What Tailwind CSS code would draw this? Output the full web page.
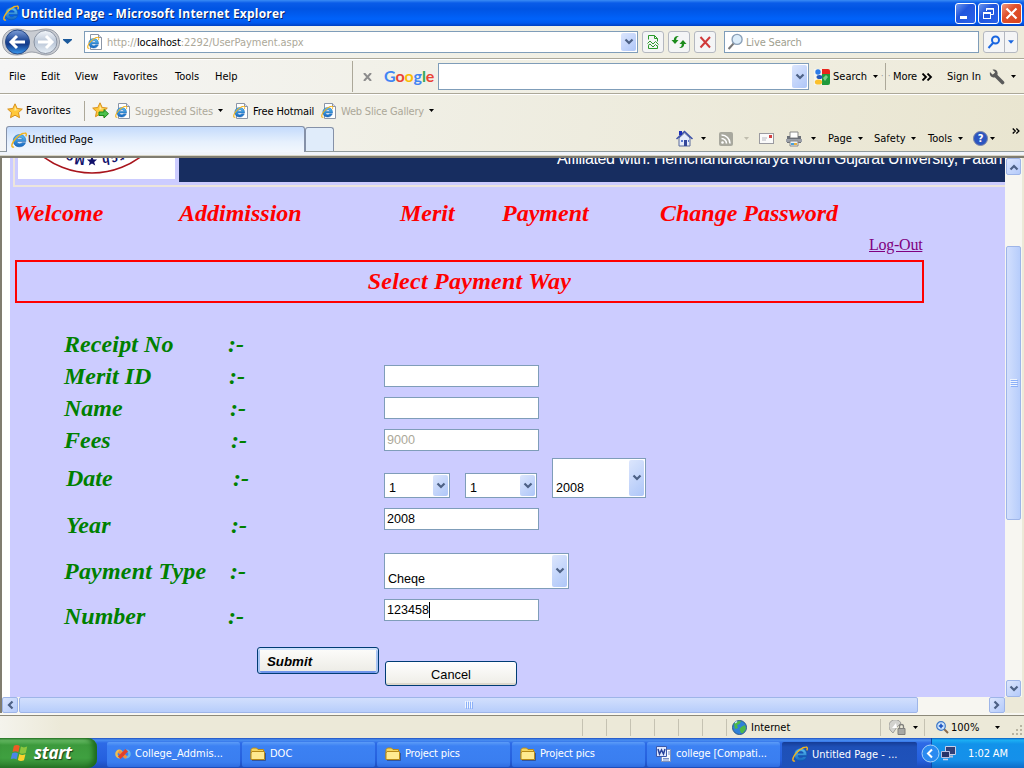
<!DOCTYPE html>
<html lang="en">
<head>
<meta charset="utf-8">
<title>Untitled Page</title>
<script src="https://cdn.jsdelivr.net/npm/@tailwindcss/browser@4"></script>
</head>
<body class="w-[1024px] h-[768px] overflow-hidden flex flex-col bg-[#ece9d8] text-black text-[11px] leading-4 whitespace-nowrap font-['DejaVu_Sans_Condensed','Noto_Sans',sans-serif]">

<svg class="absolute size-0">
  <defs>
    <linearGradient id="gb" x1="0" y1="0" x2="0" y2="1"><stop offset="0" stop-color="#7f9fd8"/><stop offset=".45" stop-color="#1d4796"/><stop offset=".6" stop-color="#143c8c"/><stop offset="1" stop-color="#3a9af0"/></linearGradient>
    <linearGradient id="gf" x1="0" y1="0" x2="0" y2="1"><stop offset="0" stop-color="#f4f7fb"/><stop offset=".5" stop-color="#b9c5d6"/><stop offset="1" stop-color="#e6eef6"/></linearGradient>
    <linearGradient id="ge" x1="0" y1="0" x2="0" y2="1"><stop offset="0" stop-color="#5cc0f4"/><stop offset="1" stop-color="#1466c0"/></linearGradient>
    <symbol id="e" viewBox="0 0 16 16">
      <path d="M14.800 9.600H6c.1 1.400 1.200 2.200 2.700 2.200 1.100 0 1.900-.4 2.400-1.100h3.400c-.8 2.600-3 4.100-5.900 4.100-3.800 0-6.300-2.400-6.300-6.100 0-3.600 2.600-6.100 6.300-6.100 4 0 6.400 2.700 6.200 7zM6 7.200h5.300C11.100 6 10.100 5.300 8.700 5.300 7.300 5.300 6.300 6 6 7.200z" fill="url(#ge)" stroke="#0e56a8" stroke-width=".5"/>
      <path d="M3 14.900C.3 15.900.3 12.800 2.300 9.600 5 5.300 10.500 1.100 13.800 1c1.900-.1 1.800 1.800.9 3.400" fill="none" stroke="#f4b41c" stroke-width="1.400"/>
    </symbol>
    <symbol id="de" viewBox="0 0 16 16">
      <path d="M3.500.5h8l3 3v12h-11z" fill="#fff" stroke="#8c96a6"/><path d="M11.500.5v3h3" fill="#dde" stroke="#8c96a6"/>
      <svg x="0" y="2.500" width="12.500" height="12.500"><use href="#e"/></svg>
    </symbol>
    <symbol id="star" viewBox="0 0 16 16"><path d="M8 .8l2.200 4.700 5.100.6-3.800 3.500 1 5.100L8 12.200l-4.500 2.500 1-5.100L.7 6.100l5.100-.6z" fill="#ffc83a" stroke="#d8901c" stroke-width="1"/><path d="M8 3l1.300 3.400 3 .4-5 1z" fill="#ffeaa0"/></symbol>
    <symbol id="car" viewBox="0 0 5 3"><path d="M0 0h5L2.500 3z"/></symbol>
    <symbol id="chev" viewBox="0 0 10 8"><path d="M1.500 1.500L5 5l3.500-3.500" fill="none" stroke="#4d6185" stroke-width="2.200"/></symbol>
    <symbol id="dbl" viewBox="0 0 11 8"><path d="M1 .5L4.500 4 1 7.500M6 .5L9.500 4 6 7.500" fill="none" stroke="#000" stroke-width="1.800"/></symbol>
    <symbol id="fold" viewBox="0 0 16 14"><path d="M1 12V2.500L2.500 1h4L8 2.500h5.500V5" fill="#f5d55e" stroke="#b88a18"/><path d="M1 12.500V6l1-1.500h12.500v8z" fill="#ffea90" stroke="#b88a18"/><path d="M2 13.500h13.500V6" fill="none" stroke="#303860" stroke-opacity=".6"/></symbol>
    <symbol id="flag" viewBox="0 0 18 16"><path d="M3.500 1.500c2-1.200 3.800-1 5.300.2L7.500 7.300C6 6.200 4.200 6 2.300 7z" fill="#ee5a24"/><path d="M9.800 2.200c1.800 1 3.600 1 5.700 0L14.200 8c-2 1-3.800.9-5.600-.1z" fill="#8cc63e"/><path d="M2 8.200c1.900-1 3.700-.8 5.200.3l-1.300 5.300C4.400 12.700 2.600 12.500.7 13.500z" fill="#4a86e8"/><path d="M8.400 9c1.700 1 3.500 1.100 5.500.1l-1.300 5.400c-2 1-3.800.9-5.500-.1z" fill="#fbd12d"/></symbol>
    <symbol id="lens" viewBox="0 0 16 16"><path d="M6.500 9.500L1.500 15" stroke="#777" stroke-width="2"/><circle cx="9.500" cy="6" r="4.700" fill="#dcedfa" stroke="#8aa0b8" stroke-width="1.300"/></symbol>
  </defs>
</svg>

<!-- Title bar -->
<header class="h-[26px] shrink-0 flex items-center pl-[3px] pr-[2px] bg-[linear-gradient(#3a8cf5_0,#0a5ce8_3px,#0054e3_9px,#0062fa_19px,#0058ee_23px,#0040c0_26px)]">
  <svg class="size-4"><use href="#e"/></svg>
  <h1 class="ml-[2px] mt-[2px] text-white font-bold text-[12px] font-['Open_Sans'] tracking-[0.21px] [text-shadow:1px_1px_#0a246a]">Untitled Page - Microsoft Internet Explorer</h1>
  <div class="ml-auto flex gap-[2px]">
    <span class="size-[21px] rounded-[3px] border border-white bg-[linear-gradient(135deg,#6d97ee,#2156dd_40%,#2a62ea)] flex items-end p-[4px]"><i class="w-[7px] h-[3px] bg-white"></i></span>
    <span class="size-[21px] rounded-[3px] border border-white bg-[linear-gradient(135deg,#6d97ee,#2156dd_40%,#2a62ea)]"><svg viewBox="0 0 19 19" fill="none" stroke="#fff"><path d="M7.500 7V4.500h7v6H12"/><path d="M7 5h8" stroke-width="1.500"/><rect x="4.500" y="8.500" width="7" height="6"/><path d="M4 9h8" stroke-width="2"/></svg></span>
    <span class="size-[21px] rounded-[3px] border border-white bg-[linear-gradient(135deg,#f09a80,#e0502c_40%,#d8441c)]"><svg viewBox="0 0 19 19"><path d="M4.500 4.500l10 10M14.500 4.500l-10 10" stroke="#fff" stroke-width="2.200"/></svg></span>
  </div>
</header>

<!-- Address bar -->
<nav class="h-[34px] shrink-0 flex items-center bg-[linear-gradient(90deg,#f6f6f6,#f1f0e6_45%,#eeebdb)] border-b border-white shadow-[inset_0_-1px_#aca899] pb-[2px]">
  <svg class="w-[61px] h-[28px] ml-[2px]" viewBox="0 0 61 28"><path d="M14 1c8 0 9 2 15 2S38 1 44 1c18 0 18 26 0 26-6 0-8-3-14-3s-8 3-16 3C-4 27-4 1 14 1z" fill="#c9ccd2" stroke="#9a9fa8"/><circle cx="15.500" cy="14" r="12" fill="url(#gb)" stroke="#284a86"/><circle cx="43.500" cy="14" r="11.500" fill="url(#gf)" stroke="#8a93a2"/><path d="M15 8l-6 6 6 6M9.500 14H23" fill="none" stroke="#fff" stroke-width="3"/><path d="M44 8l6 6-6 6M49.500 14H36" fill="none" stroke="#fff" stroke-width="3"/></svg>
  <svg class="w-[9px] h-[5px] fill-[#1c5a9c] mr-[12px]" viewBox="0 0 9 5"><path d="M0 0h9v1L4.500 5 0 1z"/></svg>
  <div class="w-[554px] h-[22px] bg-white border border-[#7f9db9] flex items-center pl-[2px] pr-px">
    <svg class="size-4"><use href="#de"/></svg>
    <span class="ml-[4px] mt-[2px] text-[#aca899] tracking-[-0.06px]">http://<b class="font-normal text-black">localhost</b>:2292/UserPayment.aspx</span>
    <span class="ml-auto w-[15px] h-[18px] rounded-[2px] bg-[linear-gradient(135deg,#dce6fd,#aec6f8)] flex items-center justify-center"><svg class="w-[10px] h-2"><use href="#chev"/></svg></span>
  </div>
  <span class="ml-[4px] w-[22px] h-[22px] rounded-[3px] border border-[#b4b8c0] bg-[#f4f5f6] p-[2px]"><svg viewBox="0 0 16 16" fill="none" stroke="#2a9a2a"><path d="M3.500 5.500v-4h6l3 3v3M3.500 11.500v3h9v-3M9.500 1.500v3h3"/><path d="M2.500 9.500L5 7l3 3 2.500-2.500 3 3M3 11.500L5 10l3 3 2.500-2.500 2 2"/></svg></span>
  <span class="ml-[4px] w-[22px] h-[22px] rounded-[3px] border border-[#b4b8c0] bg-[#f4f5f6] p-[2px]"><svg viewBox="0 0 16 16" fill="#1c8c1c"><path d="M.5 6L4 10l3.500-4H5.200C5.200 4 6 3 8 2 5 1.500 2.800 3 2.800 6zM15.500 10L12 6 8.500 10h2.300c0 2-.8 3-2.800 4 3 .5 5.200-1 5.200-4z"/></svg></span>
  <span class="ml-[4px] w-[22px] h-[22px] rounded-[3px] border border-[#b4b8c0] bg-[#f4f5f6] p-[2px]"><svg viewBox="0 0 16 16" fill="none" stroke="#d03a3a" stroke-width="2"><path d="M3.500 3l9.500 10.500M13 3L3.500 13.500"/></svg></span>
  <div class="ml-[8px] w-[255px] h-[22px] bg-white border border-[#7f9db9] flex items-center pl-[2px] text-[#a0a090]"><svg class="size-[17px]"><use href="#lens"/></svg><span class="ml-[2px] mt-[2px] tracking-[-0.15px]">Live Search</span></div>
  <div class="ml-[4px] w-[35px] h-[22px] rounded-[3px] border border-[#b4b8c0] bg-[#f4f5f6] flex items-center">
    <svg class="ml-[3px] w-[14px] h-[14px]" viewBox="0 0 14 14" fill="none" stroke="#1a66e0" stroke-width="2"><circle cx="8.500" cy="5" r="3.500"/><path d="M6 8l-4.500 5"/></svg>
    <i class="ml-[3px] w-px h-5 bg-[#b4b8c0]"></i><svg class="ml-[3px] w-[6px] h-[4px] fill-[#1a66e0]"><use href="#car"/></svg>
  </div>
</nav>

<!-- Menu bar and search toolbar -->
<nav class="h-[34px] shrink-0 flex items-center bg-[linear-gradient(90deg,#f5f5f5,#f1f0e6_45%,#eeebdb)] border-b border-[#aca899]">
  <span class="mt-px ml-[9px] w-[32px]">File</span><span class="mt-px w-[34px]">Edit</span><span class="mt-px w-[38px]">View</span><span class="mt-px w-[62px]">Favorites</span><span class="mt-px w-[40px]">Tools</span><span class="mt-px w-[137px]">Help</span>
  <i class="w-px h-[31px] bg-[#aca899]"></i>
  <svg class="ml-[10px] w-[9px] h-[8px]" viewBox="0 0 9 8"><path d="M1 0l7 8M8 0L1 8" stroke="#8c8c8c" stroke-width="2"/></svg>
  <span class="ml-[12px] w-[54px] text-[16px] leading-[20px] font-['Lato'] font-bold tracking-[-0.1px] text-[#4285f4] pb-[2px]">G<span class="text-[#ea4335]">o</span><span class="text-[#fbbc05]">o</span>g<span class="text-[#34a853]">l</span><span class="text-[#ea4335]">e</span></span>
  <div class="w-[371px] h-[27px] bg-white border border-[#7f9db9] flex items-center justify-end pr-px"><span class="w-[15px] h-[23px] rounded-[2px] bg-[linear-gradient(135deg,#dce6fd,#aec6f8)] flex items-center justify-center"><svg class="w-[10px] h-2"><use href="#chev"/></svg></span></div>
  <svg class="ml-[5px] w-4 h-4" viewBox="0 0 16 16"><path d="M8 0h6a2 2 0 012 2v3H8z" fill="#e8251c"/><path d="M8 5h8v9a2 2 0 01-2 2H8z" fill="#1f9a3c"/><path d="M0 0h8v16H0z" fill="#f6f5ef"/><circle cx="4" cy="3" r="2.700" fill="#2c7be8"/><ellipse cx="5.500" cy="8" rx="3" ry="2" fill="#2458b8"/><ellipse cx="4.500" cy="13" rx="3.700" ry="2.600" fill="#fbc02d"/><path d="M9 9l3-3 2 2-3 4z" fill="#7bd08a"/></svg>
  <span class="mt-px ml-[3px] w-[40px]">Search</span><svg class="w-[5px] h-[3px]"><use href="#car"/></svg>
  <span class="ml-[3px] w-[4px] text-[#888] text-[8px]">·</span><i class="w-px h-[27px] bg-[#aca899]"></i><span class="w-[7px] pl-[2px] text-[#888] text-[8px]">·</span>
  <span class="mt-px w-[28px] tracking-[-0.1px]">More</span><svg class="w-[12px] h-[8px]"><use href="#dbl"/></svg>
  <span class="mt-px ml-[14px] w-[42px]">Sign In</span>
  <svg class="w-[16px] h-[16px]" viewBox="0 0 16 16"><path d="M6 6l7.500 7.500" stroke="#5a5a5a" stroke-width="3.600" stroke-linecap="round"/><path d="M1 3l2.500 2.500 2-.500.500-2L3.500.8C6-.3 9 1.500 8.600 5c-.4 2.500-2.800 4-5 3.300C1.500 7.500.3 5.500 1 3z" fill="#5a5a5a"/></svg>
  <svg class="ml-[6px] w-[5px] h-[3px]"><use href="#car"/></svg>
</nav>

<!-- Favorites bar and tabs -->
<section class="h-[58px] shrink-0 flex flex-col bg-[linear-gradient(100deg,#f6f6f6,#f0efe5_40%,#e9e5d0)] border-t border-white">
  <div class="h-[32px] flex items-center">
    <svg class="ml-[7px] size-4"><use href="#star"/></svg><span class="ml-[3px] w-[58px]">Favorites</span>
    <i class="w-px h-[20px] bg-[#aca899] mr-[7px]"></i>
    <svg class="size-[17px]" viewBox="0 0 17 17"><svg width="16" height="16"><use href="#star"/></svg><path d="M7 10h5V7.500l4.500 4.200L12 16v-2.500H7z" fill="#4cc04c" stroke="#1f8a1f"/></svg>
    <svg class="ml-[6px] w-4 h-4"><use href="#de"/></svg><span class="mt-[2px] ml-[4px] w-[83px] text-[#aca899] tracking-[-0.12px]">Suggested Sites</span><svg class="w-[5px] h-[3px]"><use href="#car"/></svg>
    <svg class="ml-[10px] w-4 h-4"><use href="#de"/></svg><span class="mt-[2px] ml-[4px] w-[69px] tracking-[-0.12px]">Free Hotmail</span>
    <svg class="-ml-px w-4 h-4"><use href="#de"/></svg><span class="mt-[2px] ml-[4px] w-[88px] text-[#aca899] tracking-[-0.2px]">Web Slice Gallery</span><svg class="w-[5px] h-[3px]"><use href="#car"/></svg>
  </div>
  <div class="h-[26px] flex items-center border-b border-[#919b9c]">
    <div class="ml-[6px] self-end w-[299px] h-[26px] rounded-t-[3px] border border-b-0 border-[#8591a8] bg-[linear-gradient(#c4dbfc,#e6f0fd_60%,#f2f7fd)] flex items-center pl-[4px] -mb-px"><svg class="size-4"><use href="#e"/></svg><span class="ml-px mt-px tracking-[-0.1px]">Untitled Page</span></div>
    <div class="self-end w-[29px] h-[24px] rounded-t-[3px] border border-b-0 border-[#8591a8] bg-[#e0ecfa]"></div>
    <svg class="ml-[342px] w-[17px] h-[17px]" viewBox="0 0 17 17"><path d="M3 8v8h11V8L8.500 3z" fill="#e6ecfa" stroke="#5a6a9a"/><path d="M.5 9L8.500 1.500 16.500 9" fill="none" stroke="#3a4fa8" stroke-width="1.500"/><path d="M3 1h3v4H3z" fill="#1c2fb8"/><path d="M8 10h3v6H8z" fill="#34489a"/><path d="M5 10h2v2H5zM12 10h1v2h-1z" fill="#5b7ad0"/></svg>
    <svg class="ml-[8px] w-[5px] h-[3px]"><use href="#car"/></svg>
    <svg class="ml-[13px] w-[14px] h-[14px]" viewBox="0 0 14 14"><rect width="14" height="14" rx="2" fill="#a8a89e"/><circle cx="3.500" cy="10.500" r="1.300" fill="#fff"/><path d="M2.500 6.500a5 5 0 015 5M2.500 3a8.500 8.500 0 018.500 8.500" fill="none" stroke="#fff" stroke-width="1.600"/></svg>
    <svg class="ml-[11px] w-[5px] h-[3px] fill-[#c0bdae]"><use href="#car"/></svg>
    <svg class="ml-[10px] w-[15px] h-[11px]" viewBox="0 0 15 11"><rect x=".5" y=".5" width="14" height="10" fill="#fafafa" stroke="#9a9aa0"/><path d="M3 5h5M3 7h4" stroke="#b8b8c0"/><path d="M10 2h3v3h-3z" fill="#d04040"/></svg>
    <svg class="ml-[12px] w-[16px] h-[16px]" viewBox="0 0 16 16"><path d="M4 1h8v6H4z" fill="#fff" stroke="#888"/><path d="M1 5h3v2h8V5h3v7H1z" fill="#6c7078"/><path d="M0 8h16v3H0z" fill="#9a9ea6"/><path d="M4 10h8v5H4z" fill="#eef4fa" stroke="#888"/><path d="M5 12h3v2H5z" fill="#4aa0d8"/><path d="M8 12h3v2H8z" fill="#e8b040"/></svg>
    <svg class="ml-[9px] w-[5px] h-[3px]"><use href="#car"/></svg>
    <span class="ml-[12px] w-[30px]">Page</span><svg class="w-[5px] h-[3px]"><use href="#car"/></svg>
    <span class="ml-[11px] w-[37px]">Safety</span><svg class="w-[5px] h-[3px]"><use href="#car"/></svg>
    <span class="ml-[12px] w-[30px]">Tools</span><svg class="w-[5px] h-[3px]"><use href="#car"/></svg>
    <span class="ml-[10px] size-[15px] rounded-full border border-[#7c86a8] bg-[#2c55c0] text-white font-bold text-[11px] leading-[13px] text-center">?</span>
    <svg class="ml-[2px] w-[5px] h-[3px]"><use href="#car"/></svg>
    <svg class="ml-[17px] mb-[15px] w-[8px] h-[6px]"><use href="#dbl"/></svg>
  </div>
</section>

<!-- Page viewport -->
<div class="h-[6px] shrink-0 bg-[#f0f4fa] border-b-2 border-[#807d70] shadow-[inset_0_-1px_#d8d5c6]"></div>
<main class="h-[539px] shrink-0 flex border-l-2 border-[#807d70] bg-white">
  <div class="ml-[8px] w-[995px] bg-[#ccccff] overflow-hidden flex flex-col">
    <div class="h-[29px] ml-[3px] shrink-0 border-l-2 border-b-2 border-[#ece5dc] flex">
      <div class="ml-[3px] w-[157px] h-[21px] bg-white overflow-hidden">
        <svg width="157" height="21" viewBox="0 0 157 21"><circle cx="74" cy="-66" r="81" fill="none" stroke="#a8141c" stroke-width="1.600"/><path d="M74 -2l1.400 3.400 3.700.2-2.900 2.300 1 3.600L74 5.600l-3.200 1.900 1-3.600-2.900-2.300 3.700-.2z" fill="#10106a"/><g font-family="Liberation Sans" font-weight="bold" font-size="12" fill="#10106a"><text transform="translate(67 -1) rotate(186)">M</text><text transform="translate(56 -3) rotate(193)">o</text><text transform="translate(91 -2) rotate(172)">h</text><text transform="translate(99 -3) rotate(167)">c</text><text transform="translate(105 -5) rotate(162)">r</text></g></svg>
      </div>
      <div class="ml-[4px] w-[826px] h-[24px] bg-[#172d60] overflow-hidden pl-[378px]"><p class="-mt-[8px] text-white text-[16px] leading-[18px] font-['Liberation_Sans'] tracking-[-0.34px]">Affiliated with: Hemchandracharya North Gujarat University, Patan</p></div>
    </div>
    <div class="mt-[10px] h-[32px] shrink-0 flex font-['Liberation_Serif'] font-bold italic text-[24px] leading-[32px] text-[#ff0000]">
      <span class="ml-[4px] w-[165px] tracking-[0.1px]">Welcome</span><span class="w-[221px]">Addimission</span><span class="w-[102px]">Merit</span><span class="w-[158px]">Payment</span><span>Change Password</span>
    </div>
    <div class="mt-[6px] h-[20px] shrink-0 ml-[859px] font-['Liberation_Serif'] text-[16px] leading-[20px] tracking-[-0.25px] text-[#800080] underline">Log-Out</div>
    <h2 class="mt-[5px] ml-[5px] w-[909px] h-[43px] shrink-0 border-2 border-[#ff0000] text-center font-['Liberation_Serif'] font-bold italic text-[24px] leading-[38px] tracking-[0.25px] text-[#ff0000]">Select Payment Way</h2>

    <form class="mt-[25px] ml-[54px] flex flex-col shrink-0 font-['Liberation_Sans'] text-[12.6px]">
      <div class="h-[32px] flex items-start"><label class="w-[164px] font-['Liberation_Serif'] font-bold italic text-[24px] leading-[32px] tracking-[0.1px] text-[#008000]">Receipt No</label><span class="font-['Liberation_Serif'] font-bold italic text-[24px] leading-[32px] text-[#008000]">:-</span></div>
      <div class="h-[32px] flex items-start"><label class="w-[165px] font-['Liberation_Serif'] font-bold italic text-[24px] leading-[32px] text-[#008000]">Merit ID</label><span class="w-[155px] font-['Liberation_Serif'] font-bold italic text-[24px] leading-[32px] text-[#008000]">:-</span><div class="mt-[5px] w-[155px] h-[22px] bg-white border border-[#7f9db9]"></div></div>
      <div class="h-[32px] flex items-start"><label class="w-[166px] font-['Liberation_Serif'] font-bold italic text-[24px] leading-[32px] text-[#008000]">Name</label><span class="w-[154px] font-['Liberation_Serif'] font-bold italic text-[24px] leading-[32px] text-[#008000]">:-</span><div class="mt-[5px] w-[155px] h-[22px] bg-white border border-[#7f9db9]"></div></div>
      <div class="h-[32px] flex items-start"><label class="w-[167px] font-['Liberation_Serif'] font-bold italic text-[24px] leading-[32px] text-[#008000]">Fees</label><span class="w-[153px] font-['Liberation_Serif'] font-bold italic text-[24px] leading-[32px] text-[#008000]">:-</span><div class="mt-[5px] w-[155px] h-[22px] bg-white border border-[#7f9db9] pl-[2px] leading-[21px] text-[#aca899]">9000</div></div>
      <div class="h-[50px] flex items-start"><label class="mt-[6px] pl-[2px] w-[169px] font-['Liberation_Serif'] font-bold italic text-[24px] leading-[32px] text-[#008000]">Date</label><span class="mt-[6px] w-[151px] font-['Liberation_Serif'] font-bold italic text-[24px] leading-[32px] text-[#008000]">:-</span>
        <div class="h-[42px] flex items-end gap-[15px]">
          <div class="w-[66px] h-[25px] bg-white border border-[#7f9db9] flex items-end justify-between p-px pl-[4px]"><span>1</span><i class="w-[15px] h-[21px] rounded-[2px] bg-[linear-gradient(135deg,#dce6fd,#aec6f8)] flex items-center justify-center"><svg class="w-[10px] h-2"><use href="#chev"/></svg></i></div>
          <div class="w-[72px] h-[25px] bg-white border border-[#7f9db9] flex items-end justify-between p-px pl-[4px]"><span>1</span><i class="w-[15px] h-[21px] rounded-[2px] bg-[linear-gradient(135deg,#dce6fd,#aec6f8)] flex items-center justify-center"><svg class="w-[10px] h-2"><use href="#chev"/></svg></i></div>
          <div class="w-[94px] h-[40px] bg-white border border-[#7f9db9] flex items-end justify-between p-px pl-[3px]"><span>2008</span><i class="w-[15px] h-[36px] rounded-[2px] bg-[linear-gradient(135deg,#dce6fd,#aec6f8)] flex items-center justify-center"><svg class="w-[10px] h-2"><use href="#chev"/></svg></i></div>
        </div>
      </div>
      <div class="h-[46px] flex items-start"><label class="mt-[3px] pl-[2px] w-[167px] font-['Liberation_Serif'] font-bold italic text-[24px] leading-[32px] tracking-[0.2px] text-[#008000]">Year</label><span class="mt-[3px] w-[153px] font-['Liberation_Serif'] font-bold italic text-[24px] leading-[32px] text-[#008000]">:-</span><div class="mt-[2px] w-[155px] h-[22px] bg-white border border-[#7f9db9] pl-[2px] leading-[21px]">2008</div></div>
      <div class="h-[46px] flex items-start"><label class="mt-[3px] w-[166px] font-['Liberation_Serif'] font-bold italic text-[24px] leading-[32px] tracking-[0.22px] text-[#008000]">Payment Type</label><span class="mt-[3px] w-[154px] font-['Liberation_Serif'] font-bold italic text-[24px] leading-[32px] text-[#008000]">:-</span>
        <div class="mt-px w-[185px] h-[36px] bg-white border border-[#7f9db9] flex items-end justify-between p-px pl-[3px]"><span>Cheqe</span><i class="w-[15px] h-[32px] rounded-[2px] bg-[linear-gradient(135deg,#dce6fd,#aec6f8)] flex items-center justify-center"><svg class="w-[10px] h-2"><use href="#chev"/></svg></i></div>
      </div>
      <div class="h-[47px] flex items-start"><label class="mt-[2px] w-[164px] font-['Liberation_Serif'] font-bold italic text-[24px] leading-[32px] text-[#008000]">Number</label><span class="mt-[2px] w-[156px] font-['Liberation_Serif'] font-bold italic text-[24px] leading-[32px] text-[#008000]">:-</span><div class="mt-px w-[155px] h-[22px] bg-white border border-[#7f9db9] pl-[2px] flex items-center"><span>123458</span><i class="w-px h-4 bg-black"></i></div></div>
      <div class="flex items-start ml-[193px]">
        <div class="mt-[2px] w-[122px] h-[27px] rounded-[3px] border border-[#003c74] shadow-[inset_0_2px_#cee0fb,inset_2px_0_#a8c4f4,inset_-2px_0_#a8c4f4,inset_0_-2px_#6f94ec] bg-[linear-gradient(#fdfdfb,#ecebe5)] pl-[9px] leading-[27px] font-bold italic text-[13.3px]">Submit</div>
        <div class="ml-[6px] mt-[16px] w-[132px] h-[25px] rounded-[3px] border border-[#003c74] shadow-[inset_0_-2px_#dcd8cc] bg-[linear-gradient(#fefefe,#eeede6)] text-center leading-[25px] text-[12.8px]">Cancel</div>
      </div>
    </form>
  </div>
  <!-- Vertical scrollbar -->
  <div class="w-[19px] bg-[#f7f6f1] border-r-2 border-[#ece9d8] flex flex-col px-px">
    <span class="h-[17px] rounded-[2px] border border-[#9eb5e8] bg-[linear-gradient(135deg,#dce6fd,#b4cafa)] flex items-center justify-center"><svg class="w-[10px] h-2 rotate-180"><use href="#chev"/></svg></span>
    <span class="mt-[71px] h-[274px] rounded-[2px] border border-[#9eb5e8] bg-[linear-gradient(90deg,#d2dffd,#b7cdfb)] flex items-center justify-center"><svg class="w-2 h-2" viewBox="0 0 8 8"><path d="M0 .5h7M0 2.500h7M0 4.500h7M0 6.500h7" stroke="#eef4fe"/><path d="M1 1.500h7M1 3.500h7M1 5.500h7M1 7.500h7" stroke="#8cb0f8"/></svg></span>
    <span class="mt-auto h-[17px] rounded-[2px] border border-[#9eb5e8] bg-[linear-gradient(135deg,#dce6fd,#b4cafa)] flex items-center justify-center"><svg class="w-[10px] h-2"><use href="#chev"/></svg></span>
  </div>
</main>
<!-- Horizontal scrollbar -->
<div class="h-[16px] shrink-0 flex bg-[#ece9d8] border-l-2 border-[#807d70]">
  <div class="w-[1003px] bg-[#f7f6f1] flex">
    <span class="w-[16px] rounded-[2px] border border-[#9eb5e8] bg-[linear-gradient(135deg,#dce6fd,#b4cafa)] flex items-center justify-center"><svg class="w-[10px] h-2 rotate-90"><use href="#chev"/></svg></span>
    <span class="ml-px w-[899px] rounded-[2px] border border-[#9eb5e8] bg-[linear-gradient(#d2dffd,#b7cdfb)] flex items-center justify-center"><svg class="w-2 h-2" viewBox="0 0 8 8"><path d="M.5 0v7M2.500 0v7M4.500 0v7M6.500 0v7" stroke="#eef4fe"/><path d="M1.500 1v7M3.500 1v7M5.500 1v7M7.500 1v7" stroke="#8cb0f8"/></svg></span>
    <span class="ml-auto w-[16px] rounded-[2px] border border-[#9eb5e8] bg-[linear-gradient(135deg,#dce6fd,#b4cafa)] flex items-center justify-center"><svg class="w-[10px] h-2 -rotate-90"><use href="#chev"/></svg></span>
  </div>
</div>

<!-- Status bar -->
<div class="h-[25px] shrink-0 border-t-2 border-[#f8f7f2] flex">
  <div class="flex-1 border-t border-[#8c897a] bg-[linear-gradient(90deg,#f4f3ec,#ece9d8_6%)] flex items-center">
    <i class="ml-[582px] w-px h-[17px] bg-[#c5c2b2]"></i><i class="ml-[23px] w-px h-[17px] bg-[#c5c2b2]"></i><i class="ml-[23px] w-px h-[17px] bg-[#c5c2b2]"></i><i class="ml-[23px] w-px h-[17px] bg-[#c5c2b2]"></i><i class="ml-[23px] w-px h-[17px] bg-[#c5c2b2]"></i><i class="ml-[23px] w-px h-[17px] bg-[#c5c2b2]"></i><i class="ml-[23px] w-px h-[17px] bg-[#c5c2b2]"></i>
    <svg class="ml-[5px] w-[15px] h-[15px]" viewBox="0 0 15 15"><circle cx="7.500" cy="7.500" r="7" fill="#2f80d8" stroke="#2a5a8a"/><path d="M2 4c2-3 6-3.500 7-2.500L7.500 4 5 5l1 3-3 1zM9 7l4-2 1 4-3 4H9L7.500 9.500z" fill="#4cb848"/><path d="M3 3l2-1.500" stroke="#cde8ff" stroke-width="1.500"/></svg>
    <span class="mt-[2px] ml-[4px] w-[130px]">Internet</span><i class="-ml-px w-px h-[17px] bg-[#c5c2b2]"></i>
    <svg class="ml-[8px] w-[17px] h-[15px]" viewBox="0 0 17 15"><path d="M2 11a6.500 6.500 0 1110-8L8 7 4 13z" fill="#d2d2ce" stroke="#a0a09c"/><path d="M3 8l4-5 1 5z" fill="#fff"/><path d="M9 8.500h7v6H9z" fill="#a8a8a4" stroke="#80807c"/><path d="M10.500 8V6.500a2 2 0 014 0V8" fill="none" stroke="#80807c" stroke-width="1.300"/></svg>
    <svg class="ml-[7px] w-[5px] h-[3px]"><use href="#car"/></svg><i class="ml-[6px] w-px h-[17px] bg-[#c5c2b2]"></i>
    <svg class="ml-[11px] w-[13px] h-[13px]" viewBox="0 0 13 13"><path d="M7.500 7.500l4.500 4.500" stroke="#8a6a4a" stroke-width="2"/><circle cx="5" cy="5" r="4.300" fill="#cfe5fb" stroke="#3c78c8" stroke-width="1.200"/><path d="M2.800 5h4.400M5 2.800v4.400" stroke="#1850c0" stroke-width="1.500"/></svg>
    <span class="mt-[2px] ml-[2px] w-[44px]">100%</span><svg class="w-[5px] h-[3px]"><use href="#car"/></svg>
    <svg class="ml-[12px] mt-[6px] w-[11px] h-[11px]" viewBox="0 0 11 11"><path d="M8 0h2v2H8zM4 4h2v2H4zM8 4h2v2H8zM0 8h2v2H0zM4 8h2v2H4zM8 8h2v2H8z" fill="#b8b4a2"/></svg>
  </div>
</div>

<!-- Taskbar -->
<footer class="h-[30px] shrink-0 flex items-center text-white bg-[linear-gradient(#1f4fc0_0,#4a90f2_2px,#2d6ae6_5px,#2560de_22px,#1d4cb8_30px)]">
  <div class="w-[97px] h-[30px] rounded-r-[9px] bg-[linear-gradient(#2c7c2c_0,#6cc06a_2px,#3c9a3c_7px,#3fa040_20px,#2a7a2a_30px)] shadow-[inset_-4px_0_5px_#1d6a1d] flex items-center">
    <svg class="ml-[10px] w-[20px] h-[18px]"><use href="#flag"/></svg>
    <span class="ml-[4px] font-['Open_Sans'] font-bold italic text-[17px] leading-[22px] tracking-[-0.3px] [text-shadow:1px_1px_1px_#1a401a]">start</span>
  </div>
  <div class="ml-[10px] w-[133px] h-[25px] mt-[2px] rounded-[2px] bg-[linear-gradient(#5c9cf8,#3c81f3_4px,#3a7ef0_20px,#2f6ce0)] flex items-center pl-[8px]"><svg class="w-[16px] h-[14px]" viewBox="0 0 17 14"><ellipse cx="4.500" cy="7" rx="3" ry="3.500" fill="none" stroke="#f0c050" stroke-width="2.500"/><ellipse cx="12.500" cy="7" rx="3" ry="3.500" fill="none" stroke="#68b8e8" stroke-width="2.500"/><path d="M4 4l8 7" stroke="#f09040" stroke-width="3.500"/><path d="M4.500 11L12.500 3" stroke="#e0402c" stroke-width="4"/></svg><span class="ml-[4px]">College_Addmis...</span></div>
  <div class="ml-[2px] w-[133px] h-[25px] mt-[2px] rounded-[2px] bg-[linear-gradient(#5c9cf8,#3c81f3_4px,#3a7ef0_20px,#2f6ce0)] flex items-center pl-[8px]"><svg class="w-4 h-[14px]"><use href="#fold"/></svg><span class="ml-[4px]">DOC</span></div>
  <div class="ml-[2px] w-[133px] h-[25px] mt-[2px] rounded-[2px] bg-[linear-gradient(#5c9cf8,#3c81f3_4px,#3a7ef0_20px,#2f6ce0)] flex items-center pl-[8px]"><svg class="w-4 h-[14px]"><use href="#fold"/></svg><span class="ml-[4px] tracking-[-0.15px]">Project pics</span></div>
  <div class="ml-[2px] w-[133px] h-[25px] mt-[2px] rounded-[2px] bg-[linear-gradient(#5c9cf8,#3c81f3_4px,#3a7ef0_20px,#2f6ce0)] flex items-center pl-[8px]"><svg class="w-4 h-[14px]"><use href="#fold"/></svg><span class="ml-[4px] tracking-[-0.15px]">Project pics</span></div>
  <div class="ml-[2px] w-[133px] h-[25px] mt-[2px] rounded-[2px] bg-[linear-gradient(#5c9cf8,#3c81f3_4px,#3a7ef0_20px,#2f6ce0)] flex items-center pl-[9px]"><svg class="w-[16px] h-[16px]" viewBox="0 0 16 16"><path d="M5.500 3.500h9v12h-9z" fill="#f4f8ff" stroke="#8090b8"/><path d="M7 12.500h6M7 14h6M12 6h2M12 8h2" stroke="#7890c8"/><path d="M.5.500h10v10H.5z" fill="#dfe8ff" stroke="#3c58a8"/><path d="M2 3l1.500 5L5.500 4l2 4L9 3" fill="none" stroke="#24409a" stroke-width="1.500"/></svg><span class="ml-[4px] tracking-[-0.15px]">college [Compati...</span></div>
  <div class="ml-[2px] w-[135px] h-[25px] mt-[2px] rounded-[2px] bg-[linear-gradient(#153c96,#1e50b8_5px,#1f52ba)] flex items-center pl-[10px]"><svg class="w-4 h-4"><use href="#e"/></svg><span class="mt-px ml-[4px]">Untitled Page - ...</span></div>
  <div class="ml-auto w-[103px] h-[30px] flex items-center">
    <svg class="w-[19px] h-[19px] mr-[-9px] relative z-10 shrink-0" viewBox="0 0 19 19"><circle cx="9.500" cy="9.500" r="8.500" fill="#2a8af0" stroke="#a8d4fa"/><path d="M11 5.500l-4 4 4 4" fill="none" stroke="#fff" stroke-width="2"/></svg>
    <div class="flex-1 h-full border-l border-[#0c4aa8] bg-[linear-gradient(#0c5cc0_0,#1cb0f4_2px,#1292ea_6px,#1590ea_22px,#0e6cc8_30px)] flex items-center">
      <svg class="ml-[9px] w-[15px] h-[15px]" viewBox="0 0 15 15"><path d="M4.500.5h10v8h-10z" fill="#304078" stroke="#c8d0e8"/><path d="M8 9.500h4v2H8z" fill="#b8c0d8"/><path d="M.5 5.500h8v6h-8z" fill="#283468" stroke="#b8c0e0"/><path d="M2 13.500h5" stroke="#c8d0e8" stroke-width="1.500"/></svg>
      <span class="mt-px ml-[12px] tracking-[-0.1px]">1:02 AM</span>
    </div>
  </div>
</footer>
</body>
</html>
